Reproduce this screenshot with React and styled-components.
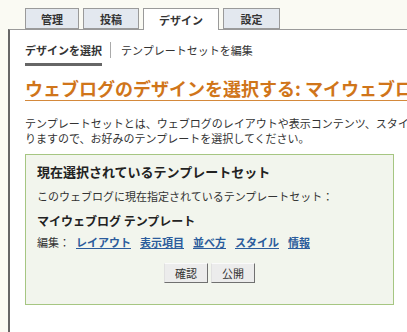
import styled, { createGlobalStyle } from 'styled-components';

const GlobalStyle = createGlobalStyle`
    html, body {
        margin: 0;
        height: 100%;
        overflow: hidden;
    }
    body {
        background: #fafaf3;
        font-family: "Noto Sans CJK JP", "Noto Sans", sans-serif;
        color: #333;
    }
`;

export const Wrapper = styled.div`
    padding: 8px 0 0 8px;
    height: 100vh;
    box-sizing: border-box;
    display: flex;
    flex-direction: column;
`;

export const TabBar = styled.ul`
    display: flex;
    gap: 4px;
    margin: 0 0 -1px;
    padding: 0 0 0 17px;
    list-style: none;
    position: relative;
    z-index: 1;
`;

export const Tab = styled.li`
    width: ${(p) => p.$width}px;
    height: ${(p) => (p.$active ? 22 : 21)}px;
    box-sizing: border-box;
    display: flex;
    align-items: center;
    justify-content: center;
    border: 1px solid #9a9a9a;
    border-bottom: ${(p) => (p.$active ? 'none' : '1px solid #9a9a9a')};
    background: ${(p) => (p.$active ? '#fff' : '#e3e8ef')};
    font-size: 11px;
    font-weight: bold;
    color: #333;
`;

export const Panel = styled.div`
    flex: 1;
    min-height: 0;
    overflow: hidden;
    background: #fff;
    border-top: 1px solid #9a9a9a;
    border-left: 2px solid #666;
    padding: 12px 0 0 15px;
`;

export const SubNav = styled.div`
    display: flex;
    align-items: center;
    font-size: 11px;
    line-height: 16px;
`;

export const SubNavItem = styled.span`
    padding-bottom: 5px;
    border-bottom: 3px solid ${(p) => (p.$active ? '#666' : 'transparent')};
    font-weight: ${(p) => (p.$active ? 'bold' : 'normal')};
    color: #333;
`;

export const SubNavSep = styled.span`
    width: 1px;
    height: 16px;
    background: #aaa;
    margin: 0 10px 8px 8px;
`;

export const Title = styled.h1`
    margin: 10px 0 0;
    font-size: 18px;
    line-height: 24px;
    font-weight: bold;
    color: #d0751a;
    border-bottom: 1px solid #d4893b;
    white-space: nowrap;
`;

export const Intro = styled.p`
    margin: 15px 0 0;
    font-size: 11px;
    line-height: 15px;
    color: #333;
    white-space: nowrap;
`;

export const Box = styled.section`
    width: 369px;
    box-sizing: border-box;
    margin-top: 8px;
    background: #f2f5ed;
    border: 1px solid #a6c682;
    padding: 8px 11px 21px;
`;

export const BoxTitle = styled.h2`
    margin: 0;
    font-size: 13px;
    line-height: 18px;
    font-weight: bold;
    color: #222;
`;

export const BoxText = styled.p`
    margin: 7px 0 0;
    font-size: 11px;
    line-height: 16px;
    color: #333;
`;

export const TemplateName = styled.h3`
    margin: 8px 0 0;
    font-size: 12px;
    line-height: 18px;
    font-weight: bold;
    color: #222;
`;

export const EditRow = styled.div`
    display: flex;
    align-items: center;
    gap: 9px;
    margin-top: 4px;
    font-size: 11px;
    line-height: 16px;
`;

export const EditLabel = styled.span`
    color: #333;
    margin-right: -3px;
`;

export const EditLink = styled.a`
    color: #2b5c9c;
    font-weight: bold;
    text-decoration: underline;
`;

export const Buttons = styled.div`
    display: flex;
    justify-content: center;
    gap: 3px;
    margin-top: 13px;
`;

export const Button = styled.button`
    width: 44px;
    height: 20px;
    padding: 0;
    font-family: inherit;
    font-size: 11px;
    color: #333;
    background: #ececec;
    border: 1px solid;
    border-color: #fafafa #707070 #707070 #e0e0e0;
`;

const tabs = [
    { label: '管理', width: 54 },
    { label: '投稿', width: 56 },
    { label: 'デザイン', width: 76, active: true },
    { label: '設定', width: 57 }
];

const links = ['レイアウト', '表示項目', '並べ方', 'スタイル', '情報'];

const App = () => (
    <Wrapper>
        <GlobalStyle />
        <TabBar>
            {tabs.map((tab) => (
                <Tab key={tab.label} $width={tab.width} $active={tab.active}>
                    {tab.label}
                </Tab>
            ))}
        </TabBar>
        <Panel>
            <SubNav>
                <SubNavItem $active>デザインを選択</SubNavItem>
                <SubNavSep />
                <SubNavItem>テンプレートセットを編集</SubNavItem>
            </SubNav>
            <Title>ウェブログのデザインを選択する: マイウェブログ</Title>
            <Intro>
                テンプレートセットとは、ウェブログのレイアウトや表示コンテンツ、スタイルなどを定義するテンプレートの集まりです。複数のテンプレートセットがあ
                <br />
                りますので、お好みのテンプレートを選択してください。
            </Intro>
            <Box>
                <BoxTitle>現在選択されているテンプレートセット</BoxTitle>
                <BoxText>このウェブログに現在指定されているテンプレートセット：</BoxText>
                <TemplateName>マイウェブログ テンプレート</TemplateName>
                <EditRow>
                    <EditLabel>編集：</EditLabel>
                    {links.map((link) => (
                        <EditLink key={link} href="#">{link}</EditLink>
                    ))}
                </EditRow>
                <Buttons>
                    <Button>確認</Button>
                    <Button>公開</Button>
                </Buttons>
            </Box>
        </Panel>
    </Wrapper>
);

export default App;
